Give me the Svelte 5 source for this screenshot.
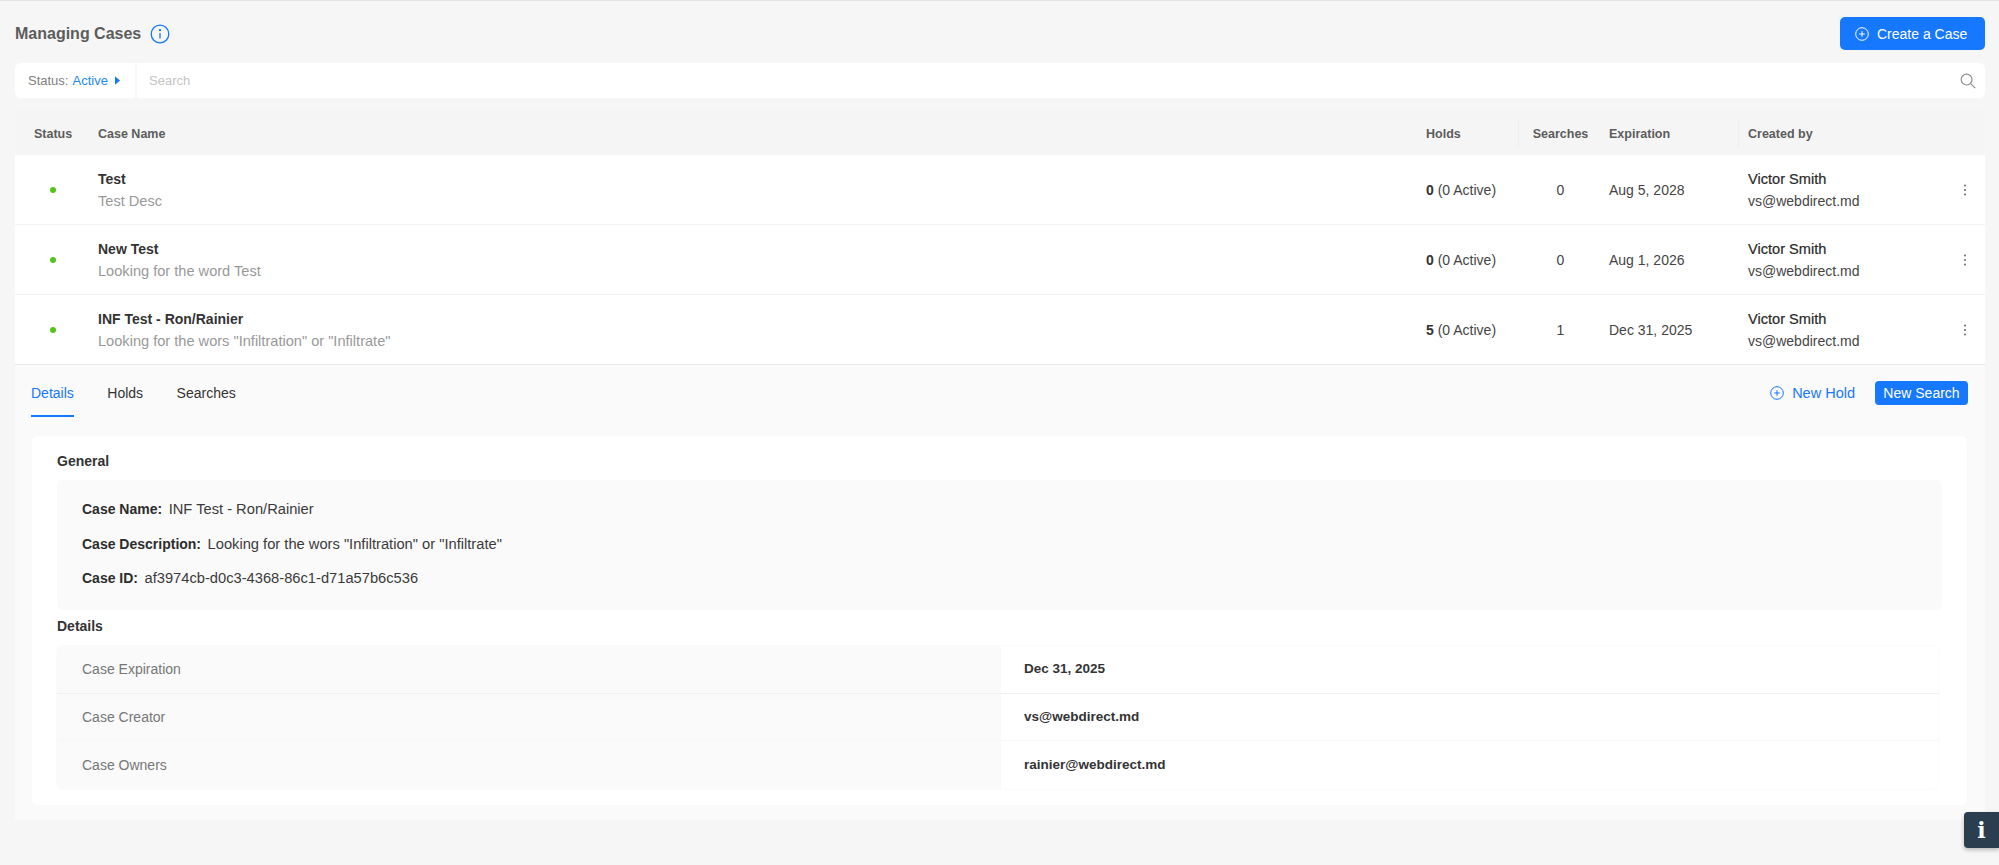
<script>
  const cases = [
    { name: 'Test', desc: 'Test Desc', holds: 0, searches: 0, exp: 'Aug 5, 2028' },
    { name: 'New Test', desc: 'Looking for the word Test', holds: 0, searches: 0, exp: 'Aug 1, 2026' },
    { name: 'INF Test - Ron/Rainier', desc: 'Looking for the wors "Infiltration" or "Infiltrate"', holds: 5, searches: 1, exp: 'Dec 31, 2025' }
  ];
  const general = [
    ['Case Name:', 'INF Test - Ron/Rainier'],
    ['Case Description:', 'Looking for the wors "Infiltration" or "Infiltrate"'],
    ['Case ID:', 'af3974cb-d0c3-4368-86c1-d71a57b6c536']
  ];
  const details = [
    ['Case Expiration', 'Dec 31, 2025'],
    ['Case Creator', 'vs@webdirect.md'],
    ['Case Owners', 'rainier@webdirect.md']
  ];
</script>

<div class="page">
  <header class="top">
    <div class="title">
      <h1>Managing Cases</h1>
      <svg class="info" viewBox="0 0 20 20" width="20" height="20" fill="none" stroke="#1677ff" stroke-width="1.3">
        <circle cx="10" cy="10" r="8.8" />
        <path d="M10 9v5.5" />
        <circle cx="10" cy="6.2" r=".5" fill="#1677ff" />
      </svg>
    </div>
    <button class="primary create">
      <svg viewBox="0 0 14 14" width="14" height="14" fill="none" stroke="#fff" stroke-width="1">
        <circle cx="7" cy="7" r="6.3" /><path d="M7 4.2v5.6M4.2 7h5.6" />
      </svg>
      Create a Case
    </button>
  </header>

  <div class="search">
    <div class="filter">
      <span class="flabel">Status:</span><span class="fval">Active</span>
      <svg viewBox="0 0 6 10" width="5" height="9"><path d="M0 0l6 5-6 5z" fill="#1677ff" /></svg>
    </div>
    <div class="placeholder">Search</div>
    <svg class="mag" viewBox="0 0 16 16" width="16" height="16" fill="none" stroke="#8f8f8f" stroke-width="1.2">
      <circle cx="6.6" cy="6.6" r="5.4" /><path d="M10.6 10.6l4.6 4.6" />
    </svg>
  </div>

  <section class="table">
    <div class="row head">
      <div class="c-status">Status</div>
      <div>Case Name</div>
      <div class="c-holds">Holds</div>
      <div class="c-search sep">Searches</div>
      <div class="c-exp">Expiration</div>
      <div class="c-by sep">Created by</div>
      <div></div>
    </div>
    {#each cases as c}
      <div class="row body">
        <div class="c-status"><span class="dot"></span></div>
        <div class="stack">
          <strong>{c.name}</strong>
          <span class="muted">{c.desc}</span>
        </div>
        <div class="c-holds"><b>{c.holds}</b> (0 Active)</div>
        <div class="c-search">{c.searches}</div>
        <div class="c-exp">{c.exp}</div>
        <div class="c-by stack">
          <span class="person">Victor Smith</span>
          <span>vs@webdirect.md</span>
        </div>
        <div class="more">
          <svg viewBox="0 0 4 14" width="4" height="14" fill="#666">
            <circle cx="2" cy="2.5" r="1" /><circle cx="2" cy="7" r="1" /><circle cx="2" cy="11.5" r="1" />
          </svg>
        </div>
      </div>
    {/each}
  </section>

  <section class="panel">
    <div class="tabbar">
      <nav class="tabs">
        <span class="tab active">Details</span>
        <span class="tab">Holds</span>
        <span class="tab">Searches</span>
      </nav>
      <div class="actions">
        <span class="link">
          <svg viewBox="0 0 14 14" width="14" height="14" fill="none" stroke="#1677ff" stroke-width="1">
            <circle cx="7" cy="7" r="6.3" /><path d="M7 4.2v5.6M4.2 7h5.6" />
          </svg>
          New Hold
        </span>
        <button class="primary small">New Search</button>
      </div>
    </div>

    <div class="card">
      <h2>General</h2>
      <div class="general">
        {#each general as g}
          <p><b>{g[0]}</b><span>{g[1]}</span></p>
        {/each}
      </div>
      <h2 class="second">Details</h2>
      <div class="dl">
        {#each details as d}
          <div class="dl-row">
            <div class="dl-k">{d[0]}</div>
            <div class="dl-v">{d[1]}</div>
          </div>
        {/each}
      </div>
    </div>
  </section>

  <button class="help" aria-label="Info">i</button>
</div>

<style>
  :global(body) {
    margin: 0;
    background: #f6f6f6;
  }
  .page {
    position: relative;
    box-sizing: border-box;
    height: 865px;
    overflow: hidden;
    padding: 0 14px 0 15px;
    border-top: 1px solid #e3e3e3;
    font: 14px/20px "Liberation Sans", Arial, sans-serif;
    color: #333;
  }
  .top {
    display: flex;
    align-items: center;
    justify-content: space-between;
    height: 62px;
    box-sizing: border-box;
    padding-top: 3px;
  }
  .title {
    display: flex;
    align-items: center;
    gap: 9px;
  }
  h1 {
    margin: 0;
    font-size: 16px;
    font-weight: 700;
    color: #5c5c5c;
  }
  button {
    font-family: inherit;
    border: 0;
    color: #fff;
    background: #1677ff;
  }
  .create {
    display: flex;
    align-items: center;
    gap: 8px;
    height: 33px;
    width: 145px;
    padding: 0 0 0 15px;
    border-radius: 5px;
    font-size: 14px;
  }
  .search {
    display: flex;
    align-items: center;
    height: 35px;
    background: #fff;
    border-radius: 6px;
  }
  .filter {
    display: flex;
    align-items: center;
    box-sizing: border-box;
    width: 122px;
    height: 100%;
    padding-left: 13px;
    border-right: 2px solid #f8f8f8;
    font-size: 13px;
  }
  .flabel {
    color: #808080;
    margin-right: 4px;
  }
  .fval {
    color: #1e88ee;
    margin-right: 7px;
  }
  .placeholder {
    flex: 1;
    padding-left: 12px;
    font-size: 13px;
    color: #c4c4c4;
  }
  .mag {
    margin-right: 9px;
  }
  .table {
    margin-top: 12px;
  }
  .row {
    display: grid;
    grid-template-columns: 83px 1328px 92px 85px 135px 206px 41px;
    align-items: center;
  }
  .head {
    height: 45px;
    padding-top: 2px;
    box-sizing: border-box;
    font-size: 12.5px;
    font-weight: 700;
    color: #5c5c5c;
    background: #f5f5f5;
  }
  .c-status {
    padding-left: 19px;
  }
  .sep {
    position: relative;
  }
  .head .sep::before {
    content: "";
    position: absolute;
    left: 0;
    top: -4px;
    bottom: -4px;
    width: 1px;
    background: #eeeeee;
  }
  .c-search {
    text-align: center;
  }
  .c-exp {
    padding-left: 6px;
  }
  .c-by {
    padding-left: 10px;
  }
  .body {
    height: 70px;
    padding-top: 1px;
    background: #fff;
    border-bottom: 1px solid #f3f3f3;
    box-sizing: border-box;
    color: #444;
    font-size: 14px;
  }
  .body:last-child {
    border-bottom-color: #e8e8e8;
  }
  .dot {
    display: block;
    width: 6px;
    height: 6px;
    margin-left: 16px;
    border-radius: 50%;
    background: #52c41a;
  }
  .stack {
    display: flex;
    flex-direction: column;
    gap: 2px;
  }
  .stack strong {
    font-weight: 700;
    color: #333;
    font-size: 14px;
  }
  .muted {
    color: #999;
    font-size: 14.6px;
  }
  .c-holds b {
    color: #333;
  }
  .person {
    color: #2a2a2a;
    font-size: 14.6px;
    -webkit-text-stroke: 0.2px #2a2a2a;
  }
  .more {
    display: flex;
    padding-left: 19px;
  }
  .panel {
    background: #fafafa;
    height: 455px;
  }
  .tabbar {
    display: flex;
    justify-content: space-between;
    height: 71px;
    box-sizing: border-box;
    padding: 16px 17px 0 16px;
  }
  .tabs {
    display: flex;
    gap: 33.5px;
    height: 36px;
  }
  .tab {
    height: 36px;
    padding-top: 2px;
    box-sizing: border-box;
    color: #333;
  }
  .tab.active {
    color: #1677ff;
    border-bottom: 2px solid #1677ff;
  }
  .actions {
    display: flex;
    align-items: flex-start;
    gap: 20px;
    height: 24px;
  }
  .link {
    display: flex;
    align-items: center;
    gap: 8px;
    height: 24px;
    color: #1677ff;
    font-size: 14.5px;
  }
  .small {
    width: 93px;
    height: 24px;
    padding: 0;
    border-radius: 4px;
    font-size: 14px;
  }
  .card {
    box-sizing: border-box;
    margin: 0 18px 0 17px;
    height: 369px;
    padding: 15px 25px;
    background: #fff;
    border-radius: 6px;
  }
  h2 {
    margin: 0;
    font-size: 14px;
    line-height: 20px;
    font-weight: 700;
    color: #333;
  }
  .general {
    margin-top: 9px;
    height: 130px;
    padding: 19px 25px 0;
    box-sizing: border-box;
    background: #fafafa;
    border-radius: 6px;
  }
  .general p {
    margin: 0 0 14.5px;
    color: #3a3a3a;
  }
  .general span {
    font-size: 14.7px;
  }
  .general b {
    margin-right: 6.5px;
    color: #2c2c2c;
  }
  .second {
    margin-top: 6px;
  }
  .dl {
    margin: 10px 3px 0 0;
    border-radius: 6px;
    overflow: hidden;
    box-shadow: 0 0 2px #f0f0f0;
  }
  .dl-row {
    display: grid;
    grid-template-columns: 944px 1fr;
    height: 47.5px;
    border-bottom: 1px solid #f0f0f0;
    box-sizing: border-box;
  }
  .dl-row:nth-child(2) {
    border-bottom-color: #f7f7f7;
  }
  .dl-row:last-child {
    border-bottom: 0;
  }
  .dl-k {
    display: flex;
    align-items: center;
    padding-left: 25px;
    background: #fafafa;
    color: #777;
  }
  .dl-v {
    display: flex;
    align-items: center;
    padding-left: 23px;
    font-size: 13.5px;
    font-weight: 700;
    color: #333;
  }
  .help {
    position: absolute;
    right: 0;
    top: 811px;
    width: 35px;
    height: 36px;
    border-radius: 4px 0 0 4px;
    background: #2b3e50;
    box-shadow: 0 2px 4px rgba(0, 0, 0, .25);
    font: 700 22px/36px "DejaVu Serif", serif;
    padding: 0;
  }
</style>
